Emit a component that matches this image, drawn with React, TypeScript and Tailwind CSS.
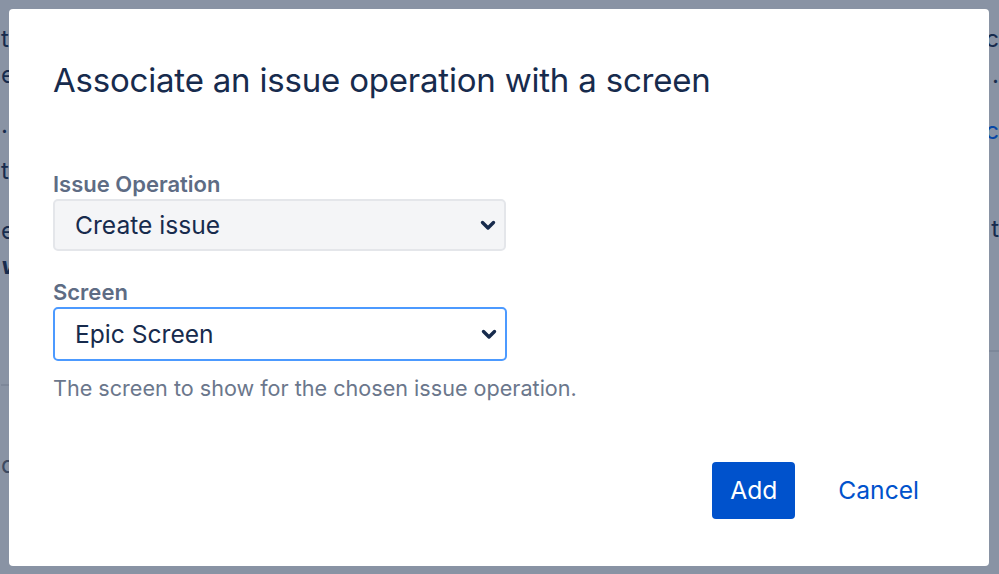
import React from "react";

function Chevron() {
  return (
    <svg width="18" height="18" viewBox="0 0 18 18" className="pointer-events-none">
      <path d="M3.5 6.5 L9 12 L14.5 6.5" fill="none" stroke="#172b4d" strokeWidth="3.4" strokeLinecap="round" strokeLinejoin="round" />
    </svg>
  );
}

function SelectBox({ value, focused }: { value: string; focused?: boolean }) {
  return (
    <div
      className={
        focused
          ? "flex h-[54px] w-[454px] items-center justify-between rounded-[5px] border-2 border-[#4c9aff] bg-white pl-[20px] pr-[7px]"
          : "flex h-[52px] w-[453px] items-center justify-between rounded-[5px] border-2 border-[#e4e6ea] bg-[#f4f5f7] pl-[20px] pr-[7px]"
      }
    >
      <span className="text-[24.6px] leading-none text-[#172b4d]">{value}</span>
      <Chevron />
    </div>
  );
}

export default function App() {
  return (
    <div
      className="relative h-[574px] w-[999px] overflow-hidden bg-[#8993a4]"
      style={{ fontFamily: "Inter, 'Noto Sans', sans-serif" }}
    >
      {/* dimmed page behind the dialog */}
      <div className="flex h-full justify-between text-[24px] leading-[30px] text-[#172b4d]">
        <div className="flex w-[40px] flex-col pl-[1px]">
          <span className="mt-[24px]">t</span>
          <span className="mt-[6px]">e</span>
          <span className="mt-[20px]">.</span>
          <span className="mt-[16px]">t</span>
          <span className="mt-[30px]">e</span>
          <span className="mt-[5px] font-bold italic">v</span>
          <div className="mt-[103px] h-[2px] w-full bg-[#7d8799]" />
          <span className="mt-[64px] text-[#3d4a61]">d</span>
        </div>
        <div className="flex w-[40px] flex-col items-end">
          <span className="mt-[24px]">c</span>
          <span className="mt-[6px]">.</span>
          <span className="mt-[26px] text-[#0747a6]">c</span>
          <span className="mt-[68px]">t</span>
          <div className="mt-[106px] h-[2px] w-full bg-[#7d8799]" />
        </div>
      </div>

      {/* dialog */}
      <div className="absolute left-[9px] top-[9px] flex h-[557px] w-[980px] flex-col rounded-[4px] bg-white px-[44px]">
        <h1 className="mt-[51px] text-[33px] font-normal leading-[40px] tracking-[-0.2px] text-[#172b4d]">
          Associate an issue operation with a screen
        </h1>

        <label className="mt-[71px] text-[22px] font-semibold leading-[26px] text-[#5e6c84]">Issue Operation</label>
        <div className="mt-[2px]">
          <SelectBox value="Create issue" />
        </div>

        <label className="mt-[28px] text-[22px] font-semibold leading-[26px] text-[#5e6c84]">Screen</label>
        <div className="mt-[2px]">
          <SelectBox value="Epic Screen" focused />
        </div>
        <p className="mt-[14px] text-[21.6px] leading-[26px] text-[#6b778c]">
          The screen to show for the chosen issue operation.
        </p>

        <div className="mt-[61px] flex items-center justify-end gap-[27px] pr-[10px]">
          <button className="h-[57px] w-[83px] rounded-[4px] bg-[#0052cc] text-[24.6px] text-white">Add</button>
          <button className="h-[57px] px-[16px] text-[24.6px] text-[#0052cc]">Cancel</button>
        </div>
      </div>
    </div>
  );
}
